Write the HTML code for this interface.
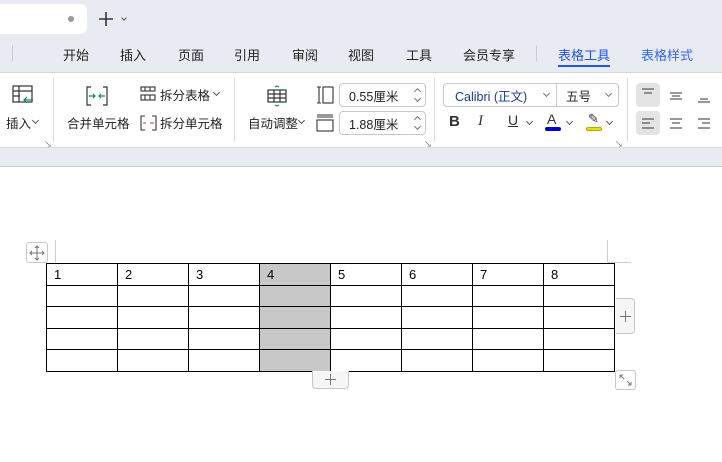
<!DOCTYPE html>
<html><head><meta charset="utf-8"><style>
*{margin:0;padding:0;box-sizing:border-box}
body{width:722px;height:462px;overflow:hidden;background:#fff;font-family:"Liberation Sans","Noto Sans CJK SC",sans-serif;position:relative;color:#222}
.a{position:absolute;white-space:nowrap}
.m{font-size:13px;top:45px;color:#222}
.t{font-size:12.5px;color:#222}
.box{position:absolute;border:1px solid #c8c8c8;border-radius:4px;background:#fff}
.sep{position:absolute;width:1px;background:#dcdcdc}
.cv{position:absolute;width:5px;height:5px;border-right:1.2px solid #555;border-bottom:1.2px solid #555;transform:rotate(45deg)}
.cu{position:absolute;width:5px;height:5px;border-left:1.2px solid #777;border-top:1.2px solid #777;transform:rotate(45deg)}
table{position:absolute;left:46px;top:263px;border-collapse:collapse}
td{border:1.5px solid #000;width:71px;height:21.5px;font-size:13px;padding:0 0 0 7px;vertical-align:middle;color:#000}
td.g{background:#c8c8c8}
svg{position:absolute}
</style></head><body>
<div class="a" style="left:0;top:0;width:722px;height:72px;background:#e8ecf2"></div>
<div class="a" style="left:-10px;top:4px;width:97px;height:30px;background:#fff;border-radius:7px"></div>
<div class="a" style="left:68px;top:16px;width:6px;height:6px;border-radius:3px;background:#999"></div>
<svg style="left:98px;top:11px" width="16" height="16" viewBox="0 0 16 16" stroke="#333" stroke-width="1.6"><path d="M8 1v14M1 8h14"/></svg>
<div class="cv" style="left:122px;top:16px;width:4px;height:4px"></div>
<div class="a" style="left:12px;top:45px;width:1px;height:16px;background:#ccc"></div>
<div class="a m" style="left:63px">开始</div>
<div class="a m" style="left:120px">插入</div>
<div class="a m" style="left:178px">页面</div>
<div class="a m" style="left:234px">引用</div>
<div class="a m" style="left:292px">审阅</div>
<div class="a m" style="left:348px">视图</div>
<div class="a m" style="left:406px">工具</div>
<div class="a m" style="left:463px">会员专享</div>
<div class="a" style="left:536px;top:45px;width:1px;height:16px;background:#ccc"></div>
<div class="a m" style="left:558px;color:#2255dd">表格工具</div>
<div class="a" style="left:558px;top:65px;width:52px;height:2px;background:#2255dd"></div>
<div class="a m" style="left:641px;color:#3366ee">表格样式</div>
<div class="a" style="left:0;top:72px;width:722px;height:1px;background:#d4d8de"></div>
<div class="a" style="left:0;top:147px;width:722px;height:20px;background:#e8ecf0;border-top:1px solid #d8dce2;border-bottom:1px solid #c8ccd0"></div>

<svg style="left:12px;top:84px" width="24" height="24" viewBox="0 0 24 24" fill="none" stroke="#333" stroke-width="1.2"><rect x="1" y="2" width="19" height="16"/><path d="M1 7h19M1 12h7M7 2v16"/><path d="M12 16h9M15 13l-3 3 3 3" stroke="#1a8a4a"/></svg>
<div class="a t" style="left:6px;top:113px">插入</div>
<div class="cv" style="left:33px;top:118px"></div>
<div class="a" style="left:44px;top:139px;font-size:8px;color:#777">↘</div>
<div class="sep" style="left:53px;top:78px;height:64px"></div>
<svg style="left:86px;top:86px" width="22" height="20" viewBox="0 0 22 20" fill="none" stroke="#333" stroke-width="1.2"><path d="M5 1H1v18h4M17 1h4v18h-4"/><path d="M3 10h6M7 8l2 2-2 2M19 10h-6M15 8l-2 2 2 2" stroke="#1a8a4a"/></svg>
<div class="a t" style="left:67px;top:113px">合并单元格</div>
<svg style="left:140px;top:86px" width="16" height="15" viewBox="0 0 16 15" fill="none" stroke="#333" stroke-width="1.1"><rect x="1" y="1" width="14" height="4"/><rect x="1" y="9" width="14" height="5"/><path d="M5 1v4M10 1v4M5 9v5M10 9v5"/></svg>
<div class="a t" style="left:160px;top:85px">拆分表格</div>
<div class="cv" style="left:214px;top:90px"></div>
<svg style="left:140px;top:115px" width="17" height="16" viewBox="0 0 17 16" fill="none" stroke="#333" stroke-width="1.1"><path d="M5 1H1v14h4M12 1h4v14h-4"/><path d="M3 8h3M10 8h4" stroke="#d0264a"/></svg>
<div class="a t" style="left:160px;top:113px">拆分单元格</div>
<div class="sep" style="left:234px;top:78px;height:64px"></div>
<svg style="left:266px;top:85px" width="22" height="22" viewBox="0 0 22 22" fill="none" stroke="#333" stroke-width="1.2"><rect x="2" y="5" width="18" height="12"/><path d="M2 9h18M2 13h18M8 5v12M14 5v12"/><path d="M9 2l2-1 2 1M9 20l2 1 2-1" stroke="#1a8a4a"/></svg>
<div class="a t" style="left:248px;top:113px">自动调整</div>
<div class="cv" style="left:299px;top:118px"></div>
<svg style="left:316px;top:86px" width="18" height="18" viewBox="0 0 18 18" fill="none" stroke="#333" stroke-width="1.1"><path d="M1 1h4M1 17h4M3 1v16"/><rect x="7" y="1" width="10" height="16"/></svg>
<svg style="left:316px;top:114px" width="18" height="18" viewBox="0 0 18 18" fill="none" stroke="#333" stroke-width="1.1"><path d="M1 1h16M1 3h16"/><rect x="1" y="6" width="16" height="11"/></svg>
<div class="box" style="left:339px;top:83px;width:87px;height:24px"></div>
<div class="a t" style="left:349px;top:86px">0.55厘米</div>
<div class="cu" style="left:415px;top:89px"></div><div class="cv" style="left:415px;top:96px;border-color:#777"></div>
<div class="box" style="left:339px;top:111px;width:87px;height:24px"></div>
<div class="a t" style="left:349px;top:114px">1.88厘米</div>
<div class="cu" style="left:415px;top:117px"></div><div class="cv" style="left:415px;top:124px;border-color:#777"></div>
<div class="a" style="left:424px;top:139px;font-size:8px;color:#777">↘</div>
<div class="sep" style="left:434px;top:78px;height:64px"></div>
<div class="box" style="left:443px;top:83px;width:176px;height:24px"></div>
<div class="a" style="left:556px;top:84px;width:1px;height:22px;background:#ccc"></div>
<div class="a t" style="left:455px;top:86px;color:#1a3a8a">Calibri (正文)</div>
<div class="cv" style="left:544px;top:91px;border-color:#777"></div>
<div class="a t" style="left:566px;top:86px">五号</div>
<div class="cv" style="left:606px;top:91px;border-color:#777"></div>
<div class="a" style="left:449px;top:113px;font-size:15px;font-weight:bold;color:#333">B</div>
<div class="a" style="left:478px;top:113px;font-size:15px;font-style:italic;font-family:'Liberation Serif';color:#333">I</div>
<div class="a" style="left:508px;top:112px;font-size:14px;text-decoration:underline;color:#333">U</div>
<div class="cv" style="left:527px;top:119px"></div>
<div class="a" style="left:547px;top:111px;font-size:14px;color:#333">A</div>
<div class="a" style="left:545px;top:127px;width:16px;height:4px;border-radius:2px;background:#0000cc"></div>
<div class="cv" style="left:567px;top:119px"></div>
<div class="a" style="left:588px;top:111px;font-size:13px;color:#333">✎</div>
<div class="a" style="left:586px;top:127px;width:16px;height:4px;border-radius:2px;background:#e8e000;border:1px solid #b8a800"></div>
<div class="cv" style="left:607px;top:119px"></div>
<div class="a" style="left:615px;top:139px;font-size:8px;color:#777">↘</div>
<div class="sep" style="left:627px;top:78px;height:64px"></div>
<div class="a" style="left:636px;top:83px;width:24px;height:24px;background:#e4e4e4;border-radius:4px"></div>
<div class="a" style="left:636px;top:111px;width:24px;height:24px;background:#e4e4e4;border-radius:4px"></div>
<svg style="left:636px;top:83px" width="86" height="52" viewBox="0 0 86 52" stroke="#333" stroke-width="1.1"><path d="M6 6h12M8 10h8M34 10h12M36 13h8M34 16h12M62 19h12M64 16h8M6 36h12M6 40h8M6 45h12M34 36h12M36 40h8M34 45h12M62 36h12M66 40h8M62 45h12"/></svg>

<div class="box" style="left:26px;top:242px;width:22px;height:21px;border-radius:3px"></div>
<svg style="left:29px;top:245px" width="16" height="16" viewBox="0 0 16 16" fill="none" stroke="#777" stroke-width="1"><path d="M8 1v14M1 8h14M6 3l2-2 2 2M6 13l2 2 2-2M3 6L1 8l2 2M13 6l2 2-2 2"/></svg>
<div class="a" style="left:55px;top:240px;width:1px;height:22px;background:#ccc"></div>
<div class="a" style="left:607px;top:240px;width:1px;height:22px;background:#ccc"></div>
<div class="a" style="left:608px;top:262px;width:23px;height:1px;background:#ccc"></div>
<table>
<tr><td>1</td><td>2</td><td>3</td><td class="g">4</td><td>5</td><td>6</td><td>7</td><td>8</td></tr>
<tr><td></td><td></td><td></td><td class="g"></td><td></td><td></td><td></td><td></td></tr>
<tr><td></td><td></td><td></td><td class="g"></td><td></td><td></td><td></td><td></td></tr>
<tr><td></td><td></td><td></td><td class="g"></td><td></td><td></td><td></td><td></td></tr>
<tr><td></td><td></td><td></td><td class="g"></td><td></td><td></td><td></td><td></td></tr>
</table>
<div class="box" style="left:312px;top:371px;width:37px;height:18px;border-top:none;border-radius:0 0 4px 4px;background:#f6f6f6"></div>
<svg style="left:325px;top:374px" width="11" height="11" viewBox="0 0 11 11" stroke="#777"><path d="M5.5 0v11M0 5.5h11"/></svg>
<div class="box" style="left:616px;top:298px;width:19px;height:36px;border-left:none;border-radius:0 4px 4px 0;background:#f6f6f6"></div>
<svg style="left:620px;top:311px" width="11" height="11" viewBox="0 0 11 11" stroke="#777"><path d="M5.5 0v11M0 5.5h11"/></svg>
<div class="box" style="left:615px;top:370px;width:21px;height:20px;border-radius:3px"></div>
<svg style="left:618px;top:373px" width="15" height="14" viewBox="0 0 15 14" fill="none" stroke="#777"><path d="M2 2l4 4M2 2v3M2 2h3M13 12l-4-4M13 12v-3M13 12h-3"/></svg>
</body></html>
